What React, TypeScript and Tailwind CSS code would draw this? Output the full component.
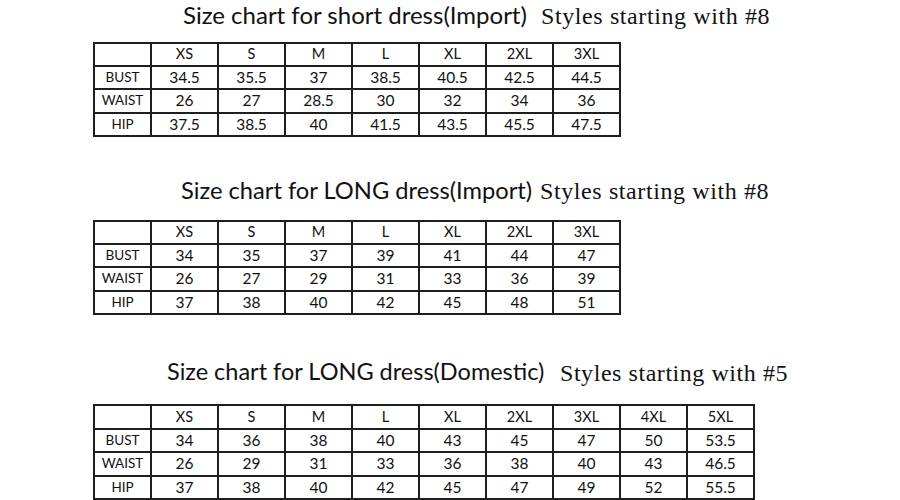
import React from "react";

type Table = {
  sizes: string[];
  rows: { label: string; values: string[] }[];
  heights: string[];
};

const sans = { fontFamily: "Lato, 'Open Sans', sans-serif" } as const;
const serif = { fontFamily: "'Liberation Serif', serif" } as const;

const t1: Table = {
  sizes: ["XS", "S", "M", "L", "XL", "2XL", "3XL"],
  rows: [
    { label: "BUST", values: ["34.5", "35.5", "37", "38.5", "40.5", "42.5", "44.5"] },
    { label: "WAIST", values: ["26", "27", "28.5", "30", "32", "34", "36"] },
    { label: "HIP", values: ["37.5", "38.5", "40", "41.5", "43.5", "45.5", "47.5"] },
  ],
  heights: ["h-[23px]", "h-[23px]", "h-[24px]", "h-[23px]"],
};

const t2: Table = {
  sizes: ["XS", "S", "M", "L", "XL", "2XL", "3XL"],
  rows: [
    { label: "BUST", values: ["34", "35", "37", "39", "41", "44", "47"] },
    { label: "WAIST", values: ["26", "27", "29", "31", "33", "36", "39"] },
    { label: "HIP", values: ["37", "38", "40", "42", "45", "48", "51"] },
  ],
  heights: ["h-[23px]", "h-[23px]", "h-[24px]", "h-[23px]"],
};

const t3: Table = {
  sizes: ["XS", "S", "M", "L", "XL", "2XL", "3XL", "4XL", "5XL"],
  rows: [
    { label: "BUST", values: ["34", "36", "38", "40", "43", "45", "47", "50", "53.5"] },
    { label: "WAIST", values: ["26", "29", "31", "33", "36", "38", "40", "43", "46.5"] },
    { label: "HIP", values: ["37", "38", "40", "42", "45", "47", "49", "52", "55.5"] },
  ],
  heights: ["h-[24px]", "h-[23px]", "h-[24px]", "h-[23px]"],
};

function SizeTable({ t }: { t: Table }) {
  return (
    <div className="ml-[93px] w-fit border-l-2 border-t-2 border-[#1e1e1e] text-[#111]" style={sans}>
      <div className={`flex ${t.heights[0]}`}>
        <div className="w-[57px] border-r-2 border-b-2 border-[#1e1e1e]" />
        {t.sizes.map((s) => (
          <div
            key={s}
            className="w-[67px] border-r-2 border-b-2 border-[#1e1e1e] flex items-center justify-center text-[14.5px] leading-none"
          >
            {s}
          </div>
        ))}
      </div>
      {t.rows.map((r, i) => (
        <div key={r.label} className={`flex ${t.heights[i + 1]}`}>
          <div className="w-[57px] border-r-2 border-b-2 border-[#1e1e1e] flex items-center justify-center text-[13.5px] leading-none">
            {r.label}
          </div>
          {r.values.map((v, j) => (
            <div
              key={j}
              className="w-[67px] border-r-2 border-b-2 border-[#1e1e1e] flex items-center justify-center text-[15.5px] leading-none"
            >
              {v}
            </div>
          ))}
        </div>
      ))}
    </div>
  );
}

export default function App() {
  return (
    <div className="w-[900px] h-[500px] bg-white overflow-hidden text-[#111]">
      {/* Section 1 */}
      <div className="flex items-baseline h-[29px] pl-[183px]">
        <span className="inline-block w-[358px] text-[24px] leading-[29px] whitespace-nowrap" style={sans}>
          Size chart for short dress(Import)
        </span>
        <span className="text-[24px] leading-[29px] tracking-[0.6px] whitespace-nowrap" style={serif}>
          Styles starting with #8
        </span>
      </div>
      <div className="mt-[13px]">
        <SizeTable t={t1} />
      </div>

      {/* Section 2 */}
      <div className="mt-[42px] flex items-baseline h-[24px] pl-[181px]">
        <span className="inline-block w-[359px] text-[23.7px] leading-none whitespace-nowrap" style={sans}>
          Size chart for LONG dress(Import)
        </span>
        <span className="text-[24px] leading-none tracking-[0.6px] whitespace-nowrap" style={serif}>
          Styles starting with #8
        </span>
      </div>
      <div className="mt-[17px]">
        <SizeTable t={t2} />
      </div>

      {/* Section 3 */}
      <div className="mt-[45px] flex items-baseline h-[24px] pl-[167px]">
        <span className="inline-block w-[393px] text-[23.5px] leading-none whitespace-nowrap" style={sans}>
          Size chart for LONG dress(Domestic)
        </span>
        <span className="text-[24px] leading-none tracking-[0.55px] whitespace-nowrap relative top-[1px]" style={serif}>
          Styles starting with #5
        </span>
      </div>
      <div className="mt-[20px]">
        <SizeTable t={t3} />
      </div>
    </div>
  );
}
